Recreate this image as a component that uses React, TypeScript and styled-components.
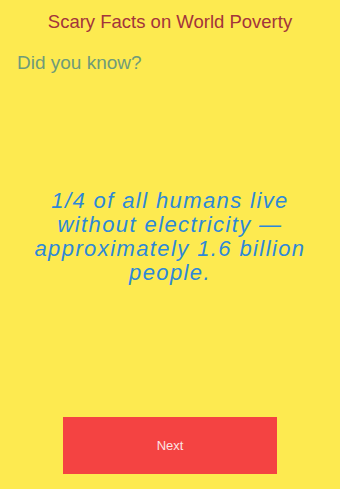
import React from 'react'
import styled, { createGlobalStyle } from 'styled-components'

const GlobalStyle = createGlobalStyle`
  html, body {
    margin: 0;
    padding: 0;
    background: #fdea50;
  }
  * {
    box-sizing: border-box;
  }
`

const Screen = styled.div`
  display: flex;
  flex-direction: column;
  height: 489px;
  background: #fdea50;
  font-family: "Liberation Sans", Arial, sans-serif;
`

const Title = styled.h1`
  margin: 11px 0 0;
  font-size: 18.5px;
  line-height: 22px;
  font-weight: normal;
  text-align: center;
  color: #a3343b;
`

const Subtitle = styled.h2`
  margin: 19px 0 0;
  padding-left: 17px;
  font-size: 19px;
  line-height: 22px;
  font-weight: normal;
  color: #6f9b79;
`

const Fact = styled.p`
  margin: 115px auto 0;
  width: 300px;
  font-size: 22px;
  line-height: 24px;
  letter-spacing: 1.4px;
  font-style: italic;
  text-align: center;
  color: #2d88d8;
`

const NextButton = styled.button`
  align-self: center;
  margin: auto 0 15px;
  width: 214px;
  height: 57px;
  border: none;
  border-radius: 0;
  background: #f44342;
  color: #fbe4e4;
  font-family: "Liberation Sans", Arial, sans-serif;
  font-size: 13px;
  cursor: pointer;
`

const App = () => {
    return (
        <>
            <GlobalStyle />
            <Screen>
                <Title>Scary Facts on World Poverty</Title>
                <Subtitle>Did you know?</Subtitle>
                <Fact>
                    1/4 of all humans live without electricity — approximately 1.6 billion people.
                </Fact>
                <NextButton>Next</NextButton>
            </Screen>
        </>
    )
}

export default App
